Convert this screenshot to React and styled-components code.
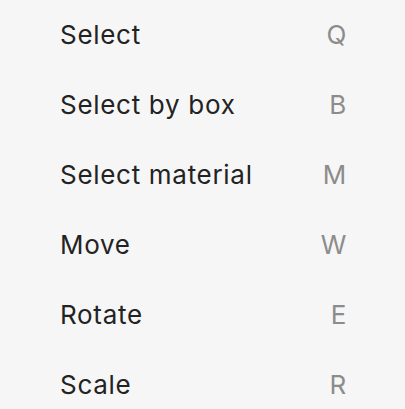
import React from "react";
import styled, { createGlobalStyle } from "styled-components";

const Global = createGlobalStyle`
  html, body { margin: 0; padding: 0; background: #f6f6f6; }
  body { font-family: Inter, "Noto Sans", sans-serif; }
`;

const Menu = styled.ul`
  list-style: none;
  margin: 0;
  padding: 0 58px 0 60px;
  display: flex;
  flex-direction: column;
`;

const Item = styled.li`
  display: flex;
  justify-content: space-between;
  align-items: center;
  height: 70px;
  line-height: 70px;
  font-size: 26px;
  letter-spacing: 0.7px;
`;

const Label = styled.span`
  color: #232323;
`;

const Shortcut = styled.span`
  color: #8c8c8c;
`;

const items = [
  ["Select", "Q"],
  ["Select by box", "B"],
  ["Select material", "M"],
  ["Move", "W"],
  ["Rotate", "E"],
  ["Scale", "R"],
];

export default function App() {
  return (
    <>
      <Global />
      <Menu>
        {items.map(([l, k]) => (
          <Item key={l}>
            <Label>{l}</Label>
            <Shortcut>{k}</Shortcut>
          </Item>
        ))}
      </Menu>
    </>
  );
}
